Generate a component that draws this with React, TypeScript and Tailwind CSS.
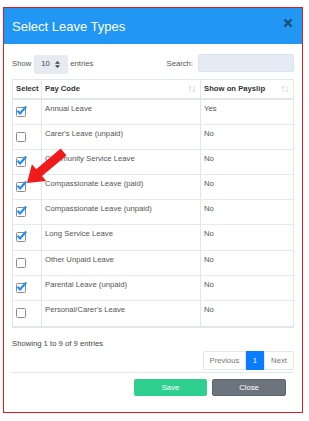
import React from "react";

const rows: { name: string; checked: boolean; show: string }[] = [
  { name: "Annual Leave", checked: true, show: "Yes" },
  { name: "Carer's Leave (unpaid)", checked: false, show: "No" },
  { name: "Community Service Leave", checked: true, show: "No" },
  { name: "Compassionate Leave (paid)", checked: true, show: "No" },
  { name: "Compassionate Leave (unpaid)", checked: true, show: "No" },
  { name: "Long Service Leave", checked: true, show: "No" },
  { name: "Other Unpaid Leave", checked: false, show: "No" },
  { name: "Parental Leave (unpaid)", checked: true, show: "No" },
  { name: "Personal/Carer's Leave", checked: false, show: "No" },
];

function Check({ checked }: { checked: boolean }) {
  return (
    <svg width="12" height="12" viewBox="0 0 12 12">
      <rect x="1.5" y="2.5" width="9" height="9" rx="1" fill="#fff" stroke="#8a8a8a" strokeWidth="1" />
      {checked && (
        <polyline points="2.6,5.8 5,8.6 11.2,1.6" fill="none" stroke="#1e8fff" strokeWidth="2.2" strokeLinejoin="round" />
      )}
    </svg>
  );
}

function SortIcon() {
  return (
    <svg width="8" height="8" viewBox="0 0 8 8">
      <path d="M2 7V1M0.8 2.3L2 1L3.2 2.3" fill="none" stroke="#d4d4d4" strokeWidth="0.8" />
      <path d="M6 1V7M4.8 5.7L6 7L7.2 5.7" fill="none" stroke="#d4d4d4" strokeWidth="0.8" />
    </svg>
  );
}

export default function App() {
  return (
    <div className="relative w-[309px] h-[421px] bg-white pt-[7px] pl-[3px] font-['Liberation_Sans',Arial,sans-serif] text-[7.7px] text-[#555]">
      <div className="w-[300px] h-[406px] border border-[#e31b1b] flex flex-col">
        <div className="h-[36px] bg-[#2196f3] flex items-center justify-between pl-[8px] pr-[8px]">
          <span className="text-white text-[13px] leading-none">Select Leave Types</span>
          <svg width="10" height="10" viewBox="0 0 10 10" className="mr-[1px] mb-[6px]">
            <path d="M1.5 1.5L8.5 8.5M8.5 1.5L1.5 8.5" stroke="#1b4e73" strokeWidth="2.4" strokeLinecap="butt" />
          </svg>
        </div>
        <div className="px-[8px] flex flex-col">
          <div className="mt-[10px] h-[20px] flex items-center justify-between">
            <div className="flex items-center">
              <span>Show</span>
              <div className="ml-[3px] w-[34px] h-[19px] bg-[#e6ebf1] rounded-[2px] flex items-center justify-between pl-[7px] pr-[8px] text-[#444]">
                <span>10</span>
                <svg width="5" height="7" viewBox="0 0 5 7">
                  <path d="M2.5 0L5 2.7H0Z M2.5 7L0 4.3H5Z" fill="#444" />
                </svg>
              </div>
              <span className="ml-[2px]">entries</span>
            </div>
            <div className="flex items-center self-start">
              <span className="mt-[1px]">Search:</span>
              <div className="ml-[5px] w-[96px] h-[18px] bg-[#e4ebf4] border border-[#dde3ea] rounded-[2px]" />
            </div>
          </div>

          <div className="mt-[5px] border border-[#e4e7ea] border-b-2">
            <div className="flex h-[20px] border-b-2 border-[#e4e7ea] font-bold text-[#333]">
              <div className="w-[28px] flex items-center pl-[3px]">Select</div>
              <div className="w-[159px] border-l border-[#e4e7ea] flex items-center justify-between pl-[3px] pr-[4px]">
                <span>Pay Code</span>
                <SortIcon />
              </div>
              <div className="flex-1 border-l border-[#e4e7ea] flex items-center justify-between pl-[3px] pr-[4px]">
                <span>Show on Payslip</span>
                <SortIcon />
              </div>
            </div>
            {rows.map((r, i) => (
              <div
                key={r.name}
                className={`flex h-[25.1px] ${i < rows.length - 1 ? "border-b border-[#e7e9ec]" : ""}`}
              >
                <div className="w-[28px] pl-[2px] pt-[5px]">
                  <Check checked={r.checked} />
                </div>
                <div className="w-[159px] border-l border-[#e4e7ea] pl-[3px] pt-[4px] leading-[9px]">{r.name}</div>
                <div className="flex-1 border-l border-[#e4e7ea] pl-[3px] pt-[4px] leading-[9px]">{r.show}</div>
              </div>
            ))}
          </div>

          <div className="mt-[11px] leading-[10px] text-[#444]">Showing 1 to 9 of 9 entries</div>
          <div className="mt-[2px] flex justify-end">
            <div className="flex h-[19px]">
              <div className="w-[43px] border border-[#e3e6ea] rounded-l-[2px] flex items-center justify-center text-[#777]">Previous</div>
              <div className="w-[18px] bg-[#0a7cff] flex items-center justify-center text-white">1</div>
              <div className="w-[30px] border border-[#e3e6ea] rounded-r-[2px] flex items-center justify-center text-[#777]">Next</div>
            </div>
          </div>
          <div className="mt-[2px] h-[1px] bg-[#e6e9ec]" />
          <div className="mt-[6px] flex justify-end gap-[5px] pr-[8px]">
            <div className="w-[73px] h-[17px] bg-[#2ecf8f] rounded-[2px] flex items-center justify-center text-white">Save</div>
            <div className="w-[74px] h-[17px] bg-[#6c757d] border border-[#5d656c] rounded-[2px] flex items-center justify-center text-white">Close</div>
          </div>
        </div>
      </div>
      <svg className="absolute left-0 top-0 pointer-events-none" width="309" height="421" viewBox="0 0 309 421">
        <polygon
          points="27,183 46.3,180.9 42,176 66.5,155.4 60.7,148.6 36.2,169.2 31.9,164.3"
          fill="#f21b1b"
        />
      </svg>
    </div>
  );
}
